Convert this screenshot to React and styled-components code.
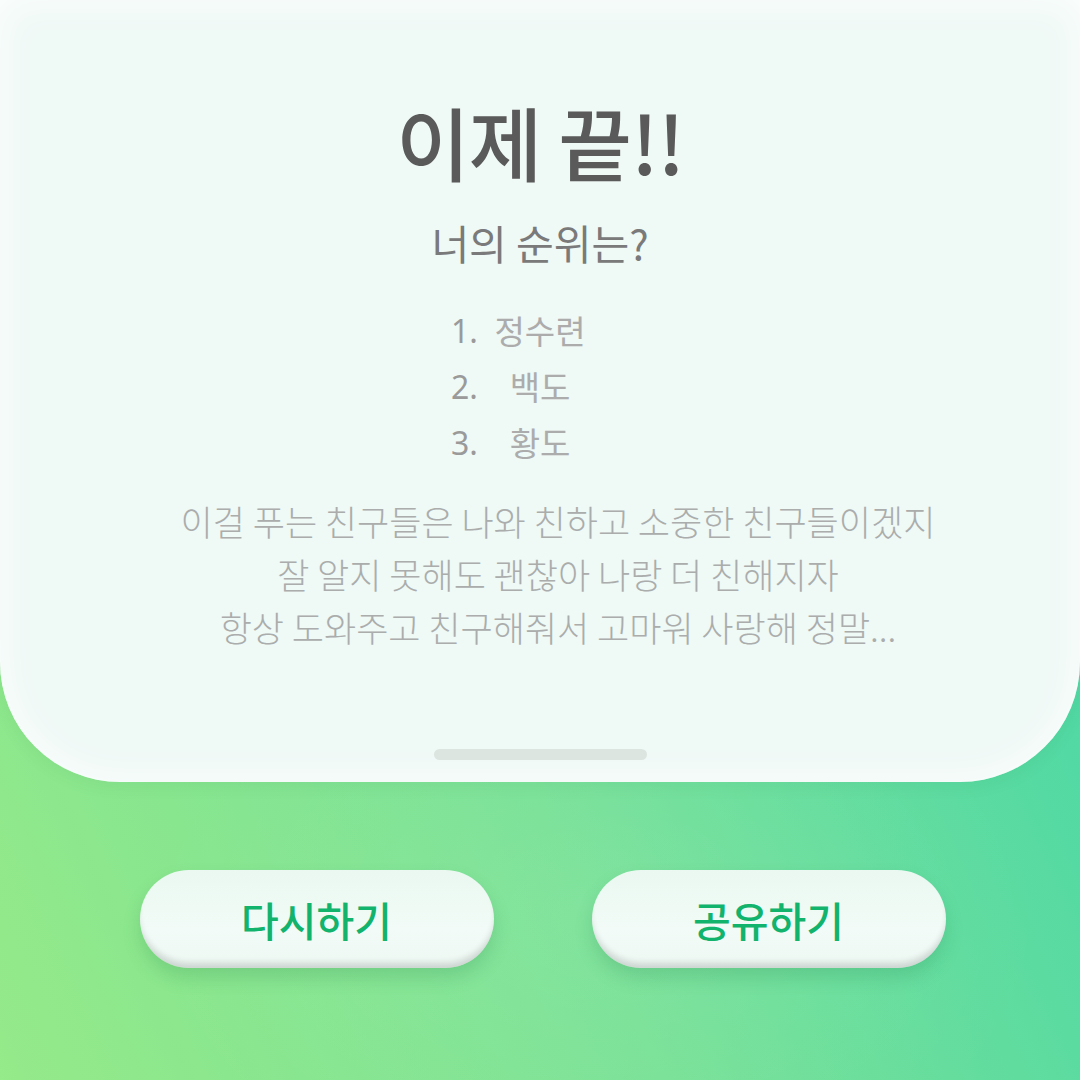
import React from "react";
import styled, { createGlobalStyle } from "styled-components";

const GlobalStyle = createGlobalStyle`
  html, body {
    margin: 0;
    padding: 0;
  }
  body {
    font-family: "Noto Sans CJK KR", "Noto Sans", sans-serif;
  }
`;

const Screen = styled.div`
  width: 1080px;
  height: 1080px;
  overflow: hidden;
  display: flex;
  flex-direction: column;
  background:
    radial-gradient(ellipse 60% 40% at 55% 85%, rgba(255, 255, 255, 0.07), transparent 70%),
    linear-gradient(65deg, #95ea89 0%, #78e196 42%, #52d9a4 78%, #44d1a0 100%);
`;

const Card = styled.div`
  height: 782px;
  flex-shrink: 0;
  display: flex;
  flex-direction: column;
  align-items: center;
  padding: 101px 0 22px;
  box-sizing: border-box;
  background: #eff9f6;
  border-radius: 0 0 120px 120px;
  box-shadow: inset 0 0 40px rgba(255, 255, 255, 0.9), 0 4px 18px rgba(0, 80, 40, 0.06);
`;

const Title = styled.h1`
  margin: 0;
  font-size: 80px;
  line-height: 78px;
  font-weight: 500;
  color: #5a5a5a;
  letter-spacing: -1px;
`;

const Subtitle = styled.h2`
  margin: 43px 0 0;
  font-size: 41px;
  line-height: 40px;
  font-weight: 400;
  color: #7a7a7a;
`;

const Ranking = styled.ol`
  list-style: none;
  margin: 40px 0 0;
  padding: 0;
`;

const RankRow = styled.li`
  display: grid;
  grid-template-columns: 40px 98px 40px;
  height: 56px;
  align-items: center;
  font-size: 33px;
  color: #acacac;
`;

const RankNo = styled.span`
  font-family: "Noto Sans", sans-serif;
  font-size: 32px;
  color: #9a9a9a;
`;

const RankName = styled.span`
  text-align: center;
  white-space: nowrap;
`;

const Message = styled.p`
  margin: 24px 0 0;
  padding-left: 36px;
  font-size: 35px;
  line-height: 53px;
  font-weight: 300;
  color: #aaadac;
  text-align: center;
  white-space: nowrap;
`;

const Handle = styled.div`
  margin-top: auto;
  width: 213px;
  height: 11px;
  border-radius: 6px;
  background: #dde5e1;
`;

const Actions = styled.div`
  flex: 1;
  display: flex;
  justify-content: center;
  align-items: flex-start;
  gap: 98px;
  padding: 88px 0 0 5px;
`;

const ActionButton = styled.button`
  width: 354px;
  height: 98px;
  border: none;
  border-radius: 49px;
  background: linear-gradient(180deg, #eaf8f1 0%, #f2fbf7 60%, #eef8f3 100%);
  box-shadow: inset 0 -7px 6px -2px rgba(0, 0, 0, 0.14), 0 10px 18px rgba(20, 110, 60, 0.18);
  font-family: "Noto Sans CJK KR", sans-serif;
  font-size: 41px;
  font-weight: 500;
  color: #12b36c;
  cursor: pointer;
`;

const ranks = ["정수련", "백도", "황도"];

export default function App() {
  return (
    <Screen>
      <GlobalStyle />
      <Card>
        <Title>이제 끝!!</Title>
        <Subtitle>너의 순위는?</Subtitle>
        <Ranking>
          {ranks.map((name, i) => (
            <RankRow key={name}>
              <RankNo>{i + 1}.</RankNo>
              <RankName>{name}</RankName>
            </RankRow>
          ))}
        </Ranking>
        <Message>
          이걸 푸는 친구들은 나와 친하고 소중한 친구들이겠지
          <br />
          잘 알지 못해도 괜찮아 나랑 더 친해지자
          <br />
          항상 도와주고 친구해줘서 고마워 사랑해 정말...
        </Message>
        <Handle />
      </Card>
      <Actions>
        <ActionButton>다시하기</ActionButton>
        <ActionButton>공유하기</ActionButton>
      </Actions>
    </Screen>
  );
}
